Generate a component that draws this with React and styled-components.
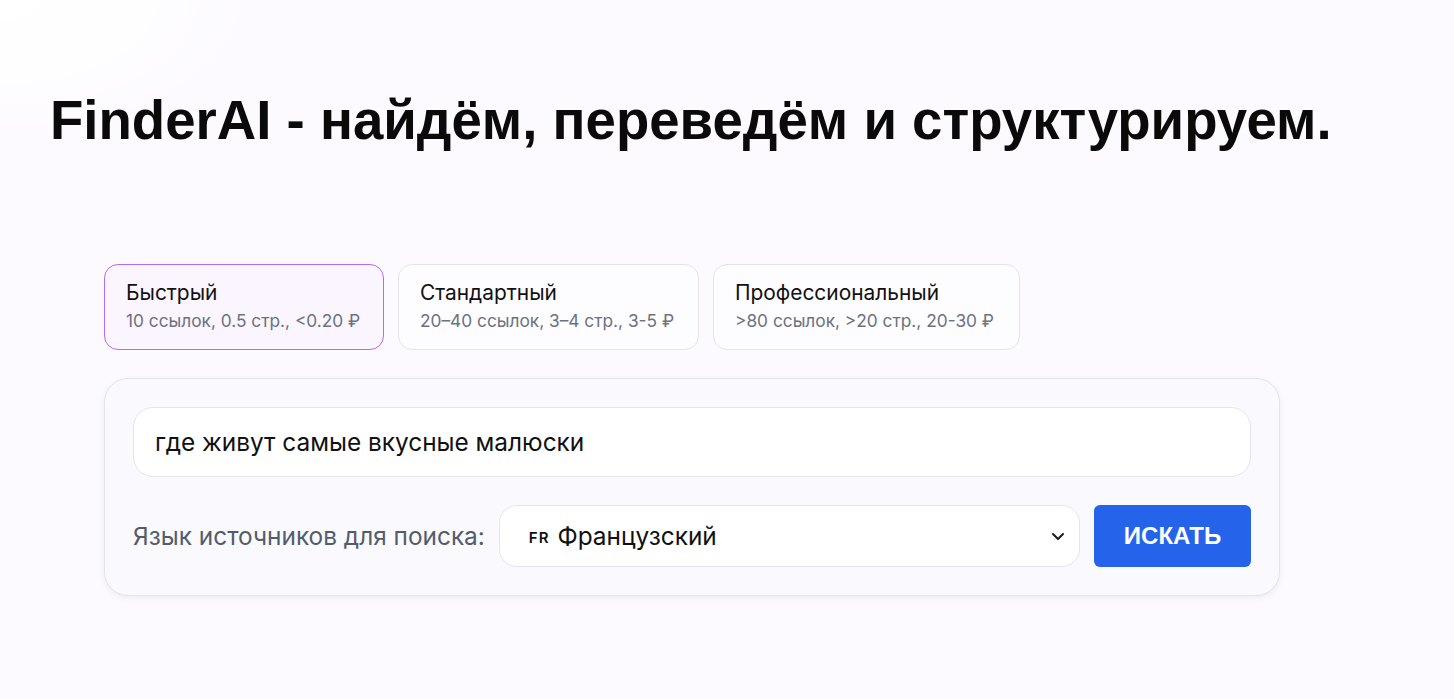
import React from "react";
import styled, { createGlobalStyle } from "styled-components";

const Global = createGlobalStyle`
  html, body { margin: 0; padding: 0; }
  body {
    background: #fcfaff;
    font-family: Inter, "Noto Sans", sans-serif;
    color: #111;
  }
  * { box-sizing: border-box; }
`;

const Page = styled.div`
  min-height: 699px;
  background:
    radial-gradient(ellipse 260px 140px at 0px 0px, #ffffff 0%, rgba(255,255,255,0.7) 45%, rgba(255,255,255,0) 100%),
    #fcfaff;
  padding: 88px 0 0 50px;
`;

const Title = styled.h1`
  margin: 0;
  font-family: "Liberation Sans", Arial, sans-serif;
  font-weight: 700;
  font-size: 54.6px;
  line-height: 66px;
  color: #0a0a0a;
`;

const Content = styled.div`
  margin: 110px 0 0 54px;
  width: 1176px;
  display: flex;
  flex-direction: column;
  gap: 28px;
`;

const Modes = styled.div`
  display: flex;
  gap: 14px;
`;

const Mode = styled.div`
  height: 86px;
  width: ${(p) => p.$w}px;
  border-radius: 14px;
  border: 1px solid ${(p) => (p.$active ? "#b36cf5" : "#e4e4ea")};
  background: ${(p) => (p.$active ? "#faf5ff" : "#fdfcff")};
  padding: 15px 21px 0;
  display: flex;
  flex-direction: column;
  gap: 4px;
`;

const ModeName = styled.div`
  font-size: 20.9px;
  line-height: 26px;
  color: #111;
`;

const ModeInfo = styled.div`
  font-size: 17.3px;
  line-height: 22px;
  color: #6b7280;
`;

const Panel = styled.div`
  border-radius: 24px;
  border: 1px solid #e4e4ea;
  background: #f9f9fe;
  box-shadow: 0 2px 6px rgba(20, 20, 40, 0.06);
  padding: 28px;
  display: flex;
  flex-direction: column;
  gap: 28px;
`;

const QueryInput = styled.div`
  height: 70px;
  border-radius: 20px;
  border: 1px solid #e4e4ea;
  background: #ffffff;
  display: flex;
  align-items: center;
  padding: 0 21px;
  font-size: 24.4px;
  color: #111;
`;

const Row = styled.div`
  display: flex;
  align-items: center;
  gap: 14px;
`;

const Label = styled.span`
  font-size: 24.4px;
  color: #545c6b;
  white-space: nowrap;
`;

const Select = styled.div`
  flex: 1;
  height: 62px;
  border-radius: 18px;
  border: 1px solid #e4e4ea;
  background: #ffffff;
  display: flex;
  align-items: center;
  padding: 0 13px 0 29px;
  font-size: 24.4px;
  color: #111;
`;

const Code = styled.span`
  font-size: 15px;
  font-weight: 600;
  letter-spacing: 1px;
  margin-right: 8px;
  margin-top: 3px;
`;

const SelectText = styled.span`
  flex: 1;
`;

const Button = styled.button`
  width: 157px;
  height: 62px;
  border: none;
  border-radius: 6px;
  background: #2563eb;
  color: #ffffff;
  font-family: "Liberation Sans", Arial, sans-serif;
  font-weight: 700;
  font-size: 24px;
  cursor: pointer;
`;

const Chevron = () => (
  <svg width="16" height="16" viewBox="0 0 16 16" fill="none">
    <path d="M3 6l5 5 5-5" stroke="#1a1a1a" strokeWidth="2" strokeLinecap="round" strokeLinejoin="round" />
  </svg>
);

const modes = [
  { name: "Быстрый", info: "10 ссылок, 0.5 стр., <0.20 ₽", w: 280, active: true },
  { name: "Стандартный", info: "20–40 ссылок, 3–4 стр., 3-5 ₽", w: 301 },
  { name: "Профессиональный", info: ">80 ссылок, >20 стр., 20-30 ₽", w: 307 },
];

export default function App() {
  return (
    <>
      <Global />
      <Page>
        <Title>FinderAI - найдём, переведём и структурируем.</Title>
        <Content>
          <Modes>
            {modes.map((m) => (
              <Mode key={m.name} $w={m.w} $active={m.active}>
                <ModeName>{m.name}</ModeName>
                <ModeInfo>{m.info}</ModeInfo>
              </Mode>
            ))}
          </Modes>
          <Panel>
            <QueryInput>где живут самые вкусные малюски</QueryInput>
            <Row>
              <Label>Язык источников для поиска:</Label>
              <Select>
                <Code>FR</Code>
                <SelectText>Французский</SelectText>
                <Chevron />
              </Select>
              <Button>ИСКАТЬ</Button>
            </Row>
          </Panel>
        </Content>
      </Page>
    </>
  );
}
